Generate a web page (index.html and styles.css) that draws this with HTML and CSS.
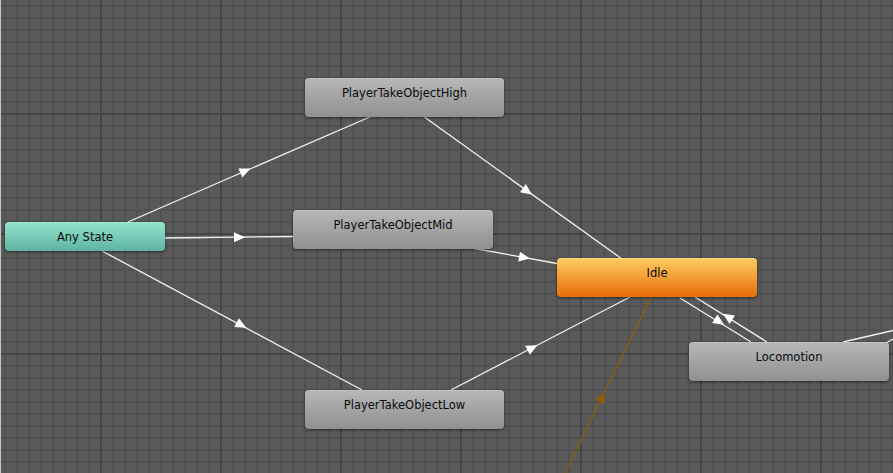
FILE: index.html
```html
<!DOCTYPE html>
<html>
<head>
<meta charset="utf-8">
<link rel="stylesheet" href="styles.css">
</head>
<body>
<div class="canvas">
  <svg class="edges" width="893" height="473" viewBox="0 0 893 473">
    <g class="white">
      <line x1="128" y1="222" x2="372" y2="116"/>
      <line x1="423" y1="116" x2="622" y2="259"/>
      <line x1="165" y1="238" x2="293" y2="236.5"/>
      <line x1="472" y1="248" x2="557" y2="263.5"/>
      <line x1="102" y1="251" x2="362" y2="390"/>
      <line x1="451" y1="390" x2="630" y2="297"/>
      <line x1="680" y1="298" x2="751" y2="342"/>
      <line x1="695" y1="297" x2="767" y2="342"/>
      <line x1="843" y1="342" x2="893" y2="330.5"/>
      <line x1="886" y1="343" x2="893" y2="339"/>
      <polygon points="6,0 -5,-5 -5,5" transform="translate(245 171) rotate(-23.5)"/>
      <polygon points="6,0 -5,-5 -5,5" transform="translate(527 191) rotate(35.7)"/>
      <polygon points="6,0 -5,-5 -5,5" transform="translate(239 237.3) rotate(-0.7)"/>
      <polygon points="6,0 -5,-5 -5,5" transform="translate(524 257.5) rotate(10.3)"/>
      <polygon points="6,0 -5,-5 -5,5" transform="translate(241 325) rotate(28.1)"/>
      <polygon points="6,0 -5,-5 -5,5" transform="translate(532 348) rotate(-27.5)"/>
      <polygon points="6,0 -5,-5 -5,5" transform="translate(719 321.5) rotate(31.8)"/>
      <polygon points="6,0 -5,-5 -5,5" transform="translate(728 317) rotate(211.8)"/>
    </g>
    <g class="amber">
      <line x1="565" y1="473" x2="651" y2="297"/>
      <polygon points="6,0 -5,-5 -5,5" transform="translate(602 397.5) rotate(-64)"/>
    </g>
  </svg>

  <div class="node any" style="left:5px;top:222px;width:160px;height:29px">Any State</div>
  <div class="node grey" style="left:305px;top:78px;width:199px;height:39px">PlayerTakeObjectHigh</div>
  <div class="node grey" style="left:293px;top:210px;width:200px;height:39px">PlayerTakeObjectMid</div>
  <div class="node grey" style="left:305px;top:390px;width:199px;height:39px">PlayerTakeObjectLow</div>
  <div class="node idle" style="left:557px;top:258px;width:200px;height:39px">Idle</div>
  <div class="node grey" style="left:689px;top:342px;width:200px;height:39px">Locomotion</div>
</div>
</body>
</html>
```
FILE: styles.css
```css
html, body {
  margin: 0;
  padding: 0;
  background: #5a5a5a;
}

.canvas {
  position: relative;
  width: 893px;
  height: 473px;
  overflow: hidden;
  box-sizing: border-box;
  border-left: 1px solid #c4c4c4;
  background-color: #5a5a5a;
  background-image:
    linear-gradient(to right, #464646 2px, transparent 2px),
    linear-gradient(to bottom, #464646 2px, transparent 2px),
    linear-gradient(to right, #515151 2px, transparent 2px),
    linear-gradient(to bottom, #515151 2px, transparent 2px);
  background-size: 120px 120px, 120px 120px, 12px 12px, 12px 12px;
  background-position: 99px 0, 0 113px, 3px 0, 0 5px;
  font-family: "DejaVu Sans", Verdana, sans-serif;
}

.edges {
  position: absolute;
  left: -1px;
  top: 0;
}

.white line {
  stroke: #f2f2f2;
  stroke-width: 1.3;
}

.white polygon {
  fill: #ffffff;
}

.amber line {
  stroke: #8d5d08;
  stroke-width: 1.3;
}

.amber polygon {
  fill: #8d5d08;
}

.node {
  position: absolute;
  box-sizing: border-box;
  margin-left: -1px;
  border-radius: 4px;
  padding-top: 7px;
  font-size: 11.5px;
  line-height: 14px;
  color: #0a0a0a;
  text-align: center;
  white-space: nowrap;
  box-shadow: 0 1px 3px rgba(0, 0, 0, 0.55);
}

.grey {
  background: linear-gradient(to bottom, #b6b6b6, #909090);
  border-top: 1px solid #c2c2c2;
}

.any {
  background: linear-gradient(to bottom, #91e2cd, #5eb4a2);
  border-top: 1px solid #a2e8d6;
}

.idle {
  background: linear-gradient(to bottom, #ffca62, #e66e05);
  border-top: 1px solid #ffd77d;
}
```
